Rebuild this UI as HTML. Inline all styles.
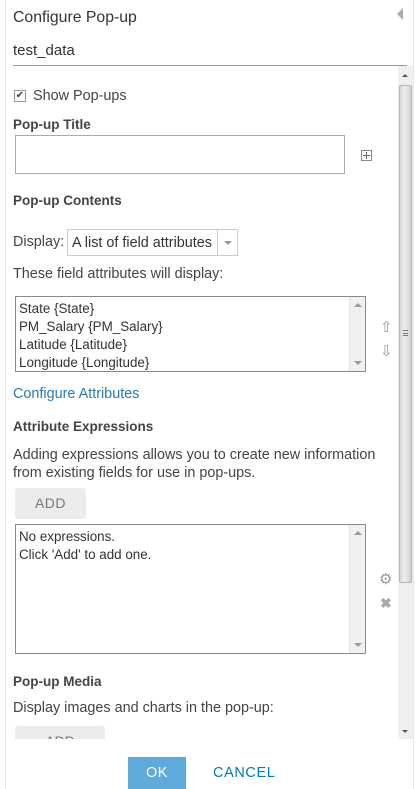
<!DOCTYPE html>
<html><head><meta charset="utf-8"><style>
*{margin:0;padding:0;box-sizing:border-box}
body{width:417px;height:789px;overflow:hidden;background:#fff;font-family:"Liberation Sans",sans-serif;color:#333;position:relative}
.a{position:absolute;white-space:nowrap}
.t{font-size:14.4px;color:#444}
.b{font-size:13.5px;font-weight:bold;color:#444}
.box{position:absolute;border:1px solid #8a8a8a;background:#fff}
.sb{position:absolute;right:0;top:0;bottom:0;width:16px;background:#f0f0f0;border-left:1px solid #e4e4e4}
.up,.dn{position:absolute;left:4px;width:0;height:0;border-left:4px solid transparent;border-right:4px solid transparent}
.up{top:6px;border-bottom:4px solid #999}
.dn{bottom:6px;border-top:4px solid #999}
.li{font-size:13.4px;color:#333;line-height:18px}
</style></head><body>
<div class="a" style="left:5px;top:0;width:1px;height:789px;background:#e6e6e6"></div>
<div class="a" style="left:413px;top:0;width:1px;height:789px;background:#e6e6e6"></div>
<div class="a" style="left:13px;top:9px;font-size:15.8px;color:#333">Configure Pop-up</div>
<div class="a" style="left:397px;top:8px;width:0;height:0;border-top:6px solid transparent;border-bottom:6px solid transparent;border-right:6px solid #aaa"></div>
<div class="a" style="left:13px;top:42px;font-size:15px;color:#333">test_data</div>
<div class="a" style="left:13px;top:65px;width:394px;height:1px;background:#999"></div>
<div class="a" style="left:398px;top:66px;width:15px;height:673px;background:#f0f0f0"></div>
<div class="a" style="left:402px;top:74px;width:0;height:0;border-left:3px solid transparent;border-right:3px solid transparent;border-bottom:3px solid #555"></div>
<div class="a" style="left:402px;top:730px;width:0;height:0;border-left:3px solid transparent;border-right:3px solid transparent;border-top:3px solid #555"></div>
<div class="a" style="left:399px;top:85px;width:13px;height:498px;background:linear-gradient(90deg,#d6d6d6,#eee 40%,#d0d0d0);border:1px solid #b5b5b5;border-radius:2px"></div>
<div class="a" style="left:403px;top:330px;width:5px;height:6px;border-top:1px solid #777;border-bottom:1px solid #777"></div>
<div class="a" style="left:403px;top:333px;width:5px;height:1px;background:#777"></div>
<div class="a" style="left:14px;top:90px;width:12px;height:12px;border:1px solid #999;background:#fff;font-size:10px;line-height:10px;text-align:center;color:#444">✔</div>
<div class="a t" style="left:33px;top:88px">Show Pop-ups</div>
<div class="a b" style="left:13px;top:117px">Pop-up Title</div>
<div class="box" style="left:15px;top:135px;width:330px;height:39px;border-color:#aaa"></div>
<div class="a" style="left:361px;top:150px;width:11px;height:11px;border:1px solid #888"></div>
<div class="a" style="left:363px;top:155px;width:7px;height:1px;background:#666"></div>
<div class="a" style="left:366px;top:152px;width:1px;height:7px;background:#666"></div>
<div class="a b" style="left:13px;top:193px">Pop-up Contents</div>
<div class="a t" style="left:13px;top:234px">Display:</div>
<div class="box" style="left:67px;top:229px;width:171px;height:27px;border-color:#ccc"></div>
<div class="a t" style="left:72px;top:235px;color:#333">A list of field attributes</div>
<div class="a" style="left:217px;top:230px;width:1px;height:25px;background:#ccc"></div>
<div class="a" style="left:224px;top:241px;width:0;height:0;border-left:4px solid transparent;border-right:4px solid transparent;border-top:4px solid #999"></div>
<div class="a t" style="left:13px;top:266px">These field attributes will display:</div>
<div class="box" style="left:15px;top:296px;width:351px;height:76px">
<div class="sb"><div class="up"></div><div class="dn"></div></div>
<div class="a li" style="left:3px;top:3px">State {State}<br>PM_Salary {PM_Salary}<br>Latitude {Latitude}<br>Longitude {Longitude}</div>
</div>
<div class="a" style="left:380px;top:318px;font-size:15px;color:#999">⇧</div>
<div class="a" style="left:380px;top:342px;font-size:15px;color:#999">⇩</div>
<div class="a t" style="left:13px;top:386px;color:#2a7ab5">Configure Attributes</div>
<div class="a b" style="left:13px;top:419px">Attribute Expressions</div>
<div class="a t" style="left:13px;top:446px;line-height:18px">Adding expressions allows you to create new information<br>from existing fields for use in pop-ups.</div>
<div class="a" style="left:15px;top:488px;width:71px;height:31px;background:#ececec;border-radius:3px;text-align:center;line-height:31px;font-size:14px;color:#777;letter-spacing:.5px">ADD</div>
<div class="box" style="left:15px;top:524px;width:351px;height:130px">
<div class="sb"><div class="up"></div><div class="dn"></div></div>
<div class="a li" style="left:3px;top:3px">No expressions.<br>Click 'Add' to add one.</div>
</div>
<div class="a" style="left:379px;top:570px;font-size:15px;color:#999">⚙</div>
<div class="a" style="left:380px;top:595px;font-size:14px;color:#aaa;font-weight:bold">✖</div>
<div class="a b" style="left:13px;top:674px">Pop-up Media</div>
<div class="a t" style="left:13px;top:700px">Display images and charts in the pop-up:</div>
<div class="a" style="left:15px;top:724px;width:90px;height:15px;overflow:hidden"><div style="width:90px;height:31px;background:#ececec;border-radius:3px;text-align:center;line-height:31px;font-size:14px;color:#777;margin-top:2px">ADD</div></div>
<div class="a" style="left:6px;top:739px;width:407px;height:50px;background:#fff"></div>
<div class="a" style="left:128px;top:757px;width:58px;height:32px;background:#5eaadb;color:#fff;text-align:center;line-height:32px;font-size:14.5px;letter-spacing:.5px">OK</div>
<div class="a" style="left:213px;top:765px;font-size:14.5px;color:#0079c1;letter-spacing:.6px">CANCEL</div>
</body></html>
